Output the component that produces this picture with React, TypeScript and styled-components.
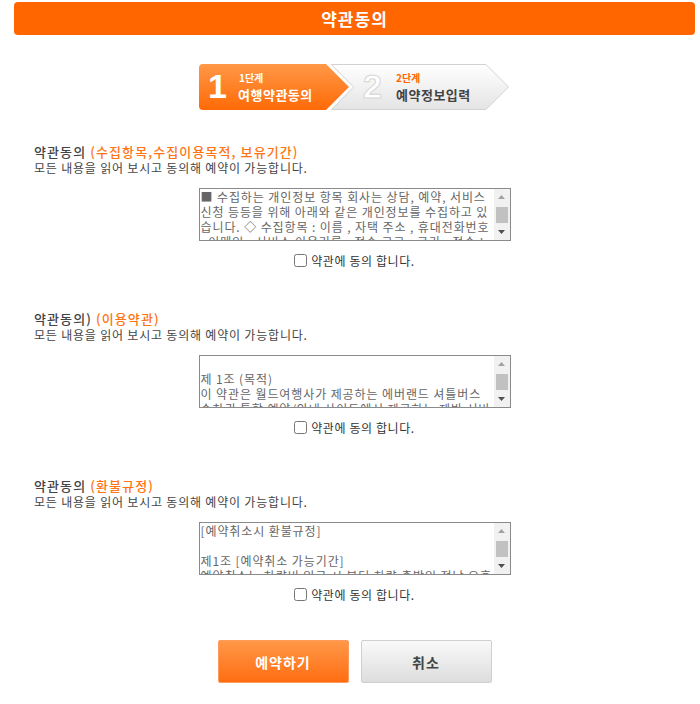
import React from "react";
import styled, { createGlobalStyle } from "styled-components";

const GlobalStyle = createGlobalStyle`
  body {
    margin: 0;
    background: #fff;
    font-family: "Noto Sans CJK KR", "Noto Sans", sans-serif;
  }
`;

const Page = styled.div`
  padding: 2px 5px 20px 14px;
`;

const Header = styled.h1`
  margin: 0;
  height: 33px;
  line-height: 33px;
  background: #ff6600;
  border-radius: 4px;
  color: #fff;
  font-size: 17px;
  font-weight: bold;
  letter-spacing: 1px;
  text-align: center;
`;

const Steps = styled.div`
  display: flex;
  justify-content: center;
  margin-top: 29px;
  height: 46px;
`;

const Section = styled.section<{ $top: number }>`
  margin-top: ${(p) => p.$top}px;
  padding-left: 20px;
`;

const Title = styled.h2`
  margin: 0;
  font-size: 13px;
  line-height: 17px;
  font-weight: 500;
  letter-spacing: 1.1px;
  color: #444;
`;

const Accent = styled.span`
  color: #ff7414;
`;

const Desc = styled.p`
  margin: 0;
  font-size: 12px;
  line-height: 16px;
  letter-spacing: 0.8px;
  color: #444;
`;

const BoxRow = styled.div`
  display: flex;
  justify-content: center;
  margin: 12px 0 0 -20px;
`;

const TermsBox = styled.div`
  box-sizing: border-box;
  display: flex;
  width: 312px;
  height: 53px;
  border: 1px solid #8a8a8a;
  background: #fff;
`;

const TermsText = styled.div`
  flex: 1;
  overflow: hidden;
  padding: 0 1px;
  font-size: 12px;
  line-height: 15px;
  letter-spacing: 0.9px;
  color: #666;
  white-space: pre-wrap;
  word-break: break-all;
`;

const ScrollBar = styled.div`
  display: flex;
  flex-direction: column;
  width: 16px;
  background: #f1f1f1;
`;

const ScrollArrow = styled.div`
  display: flex;
  align-items: center;
  justify-content: center;
  height: 16px;
`;

const ScrollThumb = styled.div`
  height: 16px;
  margin: 2px 2px 0;
  background: #c1c1c1;
`;

const ScrollTrack = styled.div`
  flex: 1;
`;

const Agree = styled.label`
  display: flex;
  justify-content: center;
  align-items: center;
  gap: 4px;
  margin: 11px 0 0 -20px;
  height: 16px;
  font-size: 12px;
  letter-spacing: 0.6px;
  color: #333;

  input {
    margin: 0;
    width: 13px;
    height: 13px;
  }
`;

const Buttons = styled.div`
  display: flex;
  justify-content: center;
  gap: 12px;
  margin-top: 38px;
`;

const Button = styled.button<{ $primary?: boolean }>`
  width: 131px;
  height: 43px;
  border-radius: 2px;
  font-family: "Noto Sans CJK KR", sans-serif;
  font-size: 14px;
  font-weight: bold;
  letter-spacing: 1px;
  cursor: pointer;
  border: 1px solid ${(p) => (p.$primary ? "#ff9a5a" : "#cfcfcf")};
  color: ${(p) => (p.$primary ? "#fff" : "#444")};
  background: ${(p) =>
    p.$primary
      ? "linear-gradient(#ff9848, #ff6d12)"
      : "linear-gradient(#f9f9f9, #dddddd)"};
`;

const Arrow = ({ down }: { down?: boolean }) => (
  <svg width="7" height="4" viewBox="0 0 7 4">
    <path
      d={down ? "M0,0 H7 L3.5,4 Z" : "M0,4 H7 L3.5,0 Z"}
      fill={down ? "#505050" : "#a3a3a3"}
    />
  </svg>
);

const StepsImage = () => (
  <svg width="311" height="46" viewBox="0 0 311 46">
    <defs>
      <linearGradient id="s1" x1="0" y1="0" x2="0" y2="1">
        <stop offset="0" stopColor="#ff9848" />
        <stop offset="1" stopColor="#ff6a06" />
      </linearGradient>
      <linearGradient id="s2" x1="0" y1="0" x2="0" y2="1">
        <stop offset="0" stopColor="#ffffff" />
        <stop offset="1" stopColor="#e4e4e4" />
      </linearGradient>
    </defs>
    <path
      d="M132.5,0.5 H287 L309.5,23 L287,45.5 H132.5 L154.5,23 Z"
      fill="url(#s2)"
      stroke="#d2d2d2"
    />
    <path d="M4,0 H127 L150,23 L127,46 H4 Q0,46 0,42 V4 Q0,0 4,0 Z" fill="url(#s1)" />
    <g fontFamily="'Liberation Sans', 'Noto Sans CJK KR', sans-serif" fontWeight="bold">
      <text x="9" y="34" fontSize="34" fill="#fff">1</text>
      <text x="164" y="34" fontSize="34" fill="#fff" stroke="#d6d6d6" strokeWidth="1">2</text>
    </g>
    <g fontFamily="'Noto Sans CJK KR', sans-serif" fontWeight="bold">
      <text x="40" y="18" fontSize="10" fill="#fff">1단계</text>
      <text x="39" y="36" fontSize="13" letterSpacing="0.5" fill="#fff">여행약관동의</text>
      <text x="197" y="18" fontSize="10" fill="#ff6600">2단계</text>
      <text x="197" y="36" fontSize="13" letterSpacing="0.5" fill="#444">예약정보입력</text>
    </g>
  </svg>
);

type Term = { title: string; accent: string; text: string; top: number };

const terms: Term[] = [
  {
    title: "약관동의 ",
    accent: "(수집항목,수집이용목적, 보유기간)",
    top: 33,
    text:
      "■ 수집하는 개인정보 항목 회사는 상담, 예약, 서비스 신청 등등을 위해 아래와 같은 개인정보를 수집하고 있습니다. ◇ 수집항목 : 이름 , 자택 주소 , 휴대전화번호 , 이메일 , 서비스 이용기록 , 접속 로그 , 쿠키 , 접속 IP 정보 , 결제기록",
  },
  {
    title: "약관동의) ",
    accent: "(이용약관)",
    top: 42,
    text:
      "\n제 1조 (목적)\n이 약관은 월드여행사가 제공하는 에버랜드 셔틀버스 승차권 통합 예약/안내 사이트에서 제공하는 제반 서비스의 이용조건 및 절차에 관한 사항을 규정함을 목적으로 합니다.",
  },
  {
    title: "약관동의 ",
    accent: "(환불규정)",
    top: 42,
    text:
      "[예약취소시 환불규정]\n\n제1조 [예약취소 가능기간]\n예약취소는 차량비 입금 시 부터 차량 출발일 전날 오후 6시까지 가능합니다.",
  },
];

export default function App() {
  return (
    <Page>
      <GlobalStyle />
      <Header>약관동의</Header>
      <Steps>
        <StepsImage />
      </Steps>
      {terms.map((t, i) => (
        <Section key={i} $top={t.top}>
          <Title>
            {t.title}
            <Accent>{t.accent}</Accent>
          </Title>
          <Desc>모든 내용을 읽어 보시고 동의해 예약이 가능합니다.</Desc>
          <BoxRow>
            <TermsBox>
              <TermsText>{t.text}</TermsText>
              <ScrollBar>
                <ScrollArrow>
                  <Arrow />
                </ScrollArrow>
                <ScrollThumb />
                <ScrollTrack />
                <ScrollArrow>
                  <Arrow down />
                </ScrollArrow>
              </ScrollBar>
            </TermsBox>
          </BoxRow>
          <Agree>
            <input type="checkbox" />
            약관에 동의 합니다.
          </Agree>
        </Section>
      ))}
      <Buttons>
        <Button $primary>예약하기</Button>
        <Button>취소</Button>
      </Buttons>
    </Page>
  );
}
